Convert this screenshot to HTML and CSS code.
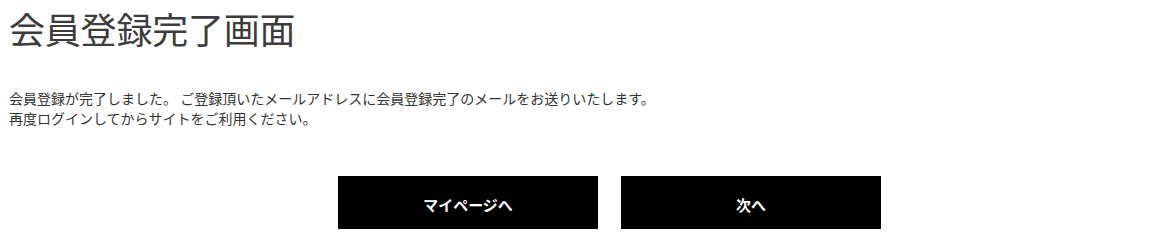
FILE: index.html
```html
<!DOCTYPE html>
<html lang="ja">
<head>
<meta charset="utf-8">
<title>会員登録完了画面</title>
<link rel="stylesheet" href="styles.css">
</head>
<body>
<main class="page">
  <h1 class="title">会員登録完了画面</h1>
  <p class="message">会員登録が完了しました。 ご登録頂いたメールアドレスに会員登録完了のメールをお送りいたします。<br>再度ログインしてからサイトをご利用ください。</p>
  <div class="actions">
    <a class="btn" href="#">マイページへ</a>
    <a class="btn" href="#">次へ</a>
  </div>
</main>
</body>
</html>
```
FILE: styles.css
```css
html, body {
  margin: 0;
  padding: 0;
  background: #fff;
}
body {
  font-family: "Noto Sans CJK JP", "Noto Sans", sans-serif;
  color: #333;
}
.page {
  padding: 0 9px;
}
.title {
  margin: 0;
  padding-top: 4px;
  font-size: 36px;
  font-weight: 400;
  line-height: 48px;
  color: #3c3c3c;
  letter-spacing: -0.2px;
}
.message {
  margin: 36px 0 0;
  font-size: 14px;
  line-height: 20px;
  color: #333;
}
.actions {
  display: flex;
  justify-content: center;
  gap: 23px;
  margin-top: 48px;
  padding-left: 44px;
}
.btn {
  display: flex;
  align-items: center;
  justify-content: center;
  box-sizing: border-box;
  width: 260px;
  height: 53px;
  padding-top: 4px;
  background: #000;
  color: #fff;
  font-size: 15px;
  font-weight: 700;
  text-decoration: none;
}
```
